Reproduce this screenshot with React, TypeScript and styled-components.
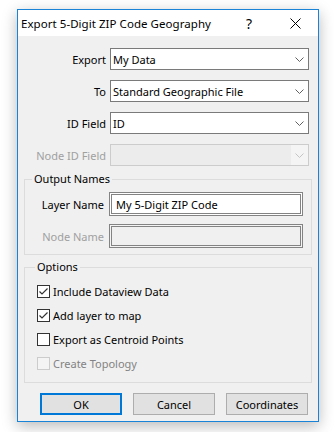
import styled, { createGlobalStyle } from 'styled-components'

const GlobalStyle = createGlobalStyle`
  html, body {
    margin: 0;
    padding: 0;
    background: #ffffff;
  }
  body {
    font-family: 'Noto Sans', 'Open Sans', sans-serif;
    font-size: 11px;
    color: #000;
  }
`

const Page = styled.div`
  width: 334px;
  height: 432px;
  padding: 9px 0 0 17px;
  box-sizing: border-box;
`

const Window = styled.div`
  width: 302px;
  box-sizing: border-box;
  border: 1px solid #1883d7;
  background: #f0f0f0;
  box-shadow: 0 4px 14px rgba(0, 0, 0, 0.28);
  display: flex;
  flex-direction: column;
`

const TitleBar = styled.div`
  height: 26px;
  background: #ffffff;
  display: flex;
  align-items: center;
`

const Title = styled.div`
  flex: 1;
  padding-left: 3px;
  font-size: 11.5px;
  letter-spacing: 0.05px;
  white-space: nowrap;
`

const TitleButton = styled.div`
  width: 46px;
  height: 26px;
  display: flex;
  align-items: center;
  justify-content: center;
  font-size: 14px;
`

const Body = styled.div`
  display: flex;
  flex-direction: column;
  padding: 12px 0 6px 0;
`

const FormGrid = styled.div`
  display: grid;
  grid-template-columns: 87px 199px;
  column-gap: 4px;
  row-gap: 10px;
  padding: 0 10px 0 1px;
`

const Label = styled.div<{ $disabled?: boolean }>`
  text-align: right;
  align-self: center;
  white-space: nowrap;
  color: ${(p) => (p.$disabled ? '#a0a0a0' : '#000')};
`

const Combo = styled.div<{ $disabled?: boolean }>`
  height: 22px;
  box-sizing: border-box;
  border: 1px solid ${(p) => (p.$disabled ? '#cccccc' : '#7a7a7a')};
  background: ${(p) => (p.$disabled ? '#ececec' : '#ffffff')};
  display: flex;
  align-items: center;
`

const ComboText = styled.div`
  flex: 1;
  padding-left: 2px;
  white-space: nowrap;
  overflow: hidden;
`

const ComboArrow = styled.div<{ $disabled?: boolean }>`
  width: 17px;
  height: 100%;
  display: flex;
  align-items: center;
  justify-content: center;
  background: ${(p) => (p.$disabled ? '#f4f4f4' : 'transparent')};
`

const GroupBox = styled.fieldset<{ $top: number; $pad: string }>`
  margin: ${(p) => p.$top}px 6px 0 6px;
  padding: ${(p) => p.$pad};
  border: 1px solid #dcdcdc;
  min-width: 0;
`

const Legend = styled.legend<{ $indent: number }>`
  margin-left: ${(p) => p.$indent}px;
  padding: 0 2px;
  line-height: 16px;
  font-size: 11px;
`

const NameGrid = styled.div`
  display: grid;
  grid-template-columns: 79px 194px;
  column-gap: 5px;
  row-gap: 8px;
`

const TextBox = styled.div<{ $disabled?: boolean }>`
  height: 24px;
  box-sizing: border-box;
  border: 1px solid #838383;
  box-shadow: inset 0 0 0 1px ${(p) => (p.$disabled ? '#f4f4f4' : '#ffffff')},
    inset 0 0 0 2px #838383;
  background: ${(p) => (p.$disabled ? '#f0f0f0' : '#ffffff')};
  display: flex;
  align-items: center;
  padding-left: 6px;
  white-space: nowrap;
`

const CheckList = styled.div`
  display: flex;
  flex-direction: column;
  gap: 11px;
`

const CheckRow = styled.div<{ $disabled?: boolean }>`
  height: 13px;
  display: flex;
  align-items: center;
  gap: 3px;
  color: ${(p) => (p.$disabled ? '#838383' : '#000')};
  white-space: nowrap;
`

const Box = styled.div<{ $disabled?: boolean }>`
  width: 13px;
  height: 13px;
  box-sizing: border-box;
  border: 1px solid ${(p) => (p.$disabled ? '#cccccc' : '#333333')};
  background: ${(p) => (p.$disabled ? '#f4f4f4' : '#ffffff')};
  display: flex;
  align-items: center;
  justify-content: center;
  flex: none;
`

const ButtonRow = styled.div`
  display: flex;
  gap: 11px;
  margin-top: 10px;
  padding-left: 22px;
`

const Button = styled.div<{ $default?: boolean }>`
  width: 82px;
  height: 22px;
  box-sizing: border-box;
  border: ${(p) => (p.$default ? '2px solid #0078d7' : '1px solid #adadad')};
  background: #e1e1e1;
  display: flex;
  align-items: center;
  justify-content: center;
`

function Chevron({ disabled }: { disabled?: boolean }) {
  return (
    <svg width="9" height="5" viewBox="0 0 9 5">
      <path d="M0.5 0.5 L4.5 4.5 L8.5 0.5" fill="none" stroke={disabled ? '#c4c4c4' : '#606060'} strokeWidth="1" />
    </svg>
  )
}

function Check() {
  return (
    <svg width="11" height="11" viewBox="0 0 11 11">
      <path d="M1.5 5.5 L4 8 L9.5 2.5" fill="none" stroke="#333" strokeWidth="1.2" />
    </svg>
  )
}

function ComboBox({ value, disabled }: { value?: string; disabled?: boolean }) {
  return (
    <Combo $disabled={disabled}>
      <ComboText>{value}</ComboText>
      <ComboArrow $disabled={disabled}>
        <Chevron disabled={disabled} />
      </ComboArrow>
    </Combo>
  )
}

const options = [
  { label: 'Include Dataview Data', checked: true },
  { label: 'Add layer to map', checked: true },
  { label: 'Export as Centroid Points', checked: false },
  { label: 'Create Topology', checked: false, disabled: true },
]

export default function App() {
  return (
    <>
      <GlobalStyle />
      <Page>
        <Window>
          <TitleBar>
            <Title>Export 5-Digit ZIP Code Geography</Title>
            <TitleButton>?</TitleButton>
            <TitleButton>
              <svg width="11" height="11" viewBox="0 0 11 11">
                <path d="M0.5 0.5 L10.5 10.5 M10.5 0.5 L0.5 10.5" stroke="#000" strokeWidth="1" />
              </svg>
            </TitleButton>
          </TitleBar>
          <Body>
            <FormGrid>
              <Label>Export</Label>
              <ComboBox value="My Data" />
              <Label>To</Label>
              <ComboBox value="Standard Geographic File" />
              <Label>ID Field</Label>
              <ComboBox value="ID" />
              <Label $disabled>Node ID Field</Label>
              <ComboBox disabled />
            </FormGrid>

            <GroupBox $top={5} $pad="5px 8px 6px 0">
              <Legend $indent={7}>Output Names</Legend>
              <NameGrid>
                <Label>Layer Name</Label>
                <TextBox>My 5-Digit ZIP Code</TextBox>
                <Label $disabled>Node Name</Label>
                <TextBox $disabled />
              </NameGrid>
            </GroupBox>

            <GroupBox $top={4} $pad="10px 8px 12px 12px">
              <Legend $indent={-2}>Options</Legend>
              <CheckList>
                {options.map((o) => (
                  <CheckRow key={o.label} $disabled={o.disabled}>
                    <Box $disabled={o.disabled}>{o.checked && <Check />}</Box>
                    {o.label}
                  </CheckRow>
                ))}
              </CheckList>
            </GroupBox>

            <ButtonRow>
              <Button $default>OK</Button>
              <Button>Cancel</Button>
              <Button>Coordinates</Button>
            </ButtonRow>
          </Body>
        </Window>
      </Page>
    </>
  )
}
